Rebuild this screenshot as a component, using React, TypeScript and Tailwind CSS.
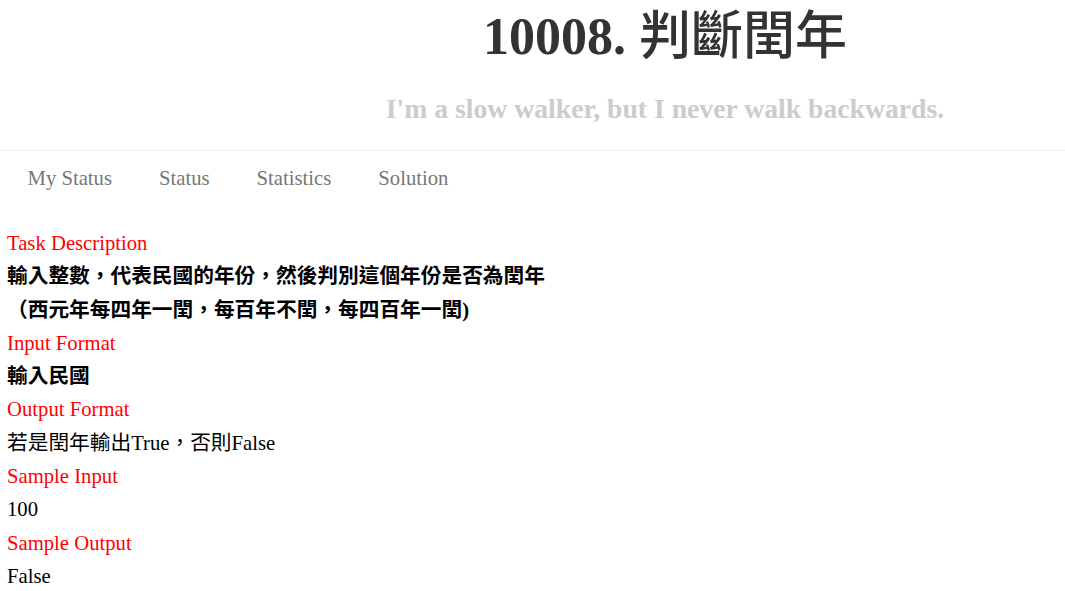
import React from "react";

const serif = "font-['Liberation_Serif','Noto_Sans_CJK_TC',serif]";

export default function App() {
  const sections: { label: string; lines: { text: string; bold?: boolean }[] }[] = [
    {
      label: "Task Description",
      lines: [
        { text: "輸入整數，代表民國的年份，然後判別這個年份是否為閏年", bold: true },
        { text: "（西元年每四年一閏，每百年不閏，每四百年一閏)", bold: true },
      ],
    },
    { label: "Input Format", lines: [{ text: "輸入民國", bold: true }] },
    { label: "Output Format", lines: [{ text: "若是閏年輸出True，否則False" }] },
    { label: "Sample Input", lines: [{ text: "100" }] },
    { label: "Sample Output", lines: [{ text: "False" }] },
  ];
  return (
    <div className={`${serif} bg-white w-[1065px] h-[591px] overflow-hidden`}>
      <header className="pl-[265px] flex flex-col items-center h-[150px]">
        <h1 className="text-[52px] leading-[52px] font-bold text-[#333] mt-[11px]">
          10008. <span className="font-medium">判斷閏年</span>
        </h1>
        <p className="text-[27.7px] leading-[30px] font-bold text-[#ccc] mt-[31px]">
          I'm a slow walker, but I never walk backwards.
        </p>
      </header>
      <nav className="border-t border-[#eee] flex pl-[4px] h-[56px] items-center">
        {["My Status", "Status", "Statistics", "Solution"].map((n) => (
          <a key={n} className="px-[23.5px] text-[20.7px] text-[#777]">
            {n}
          </a>
        ))}
      </nav>
      <main className="pl-[7px] pt-[21px] text-[20.7px] leading-[33.3px] text-black">
        {sections.map((s) => (
          <div key={s.label}>
            <div className="text-[#ff0000]">{s.label}</div>
            {s.lines.map((l, i) => (
              <div key={i} className={l.bold ? "font-bold" : ""}>
                {l.text}
              </div>
            ))}
          </div>
        ))}
      </main>
    </div>
  );
}
